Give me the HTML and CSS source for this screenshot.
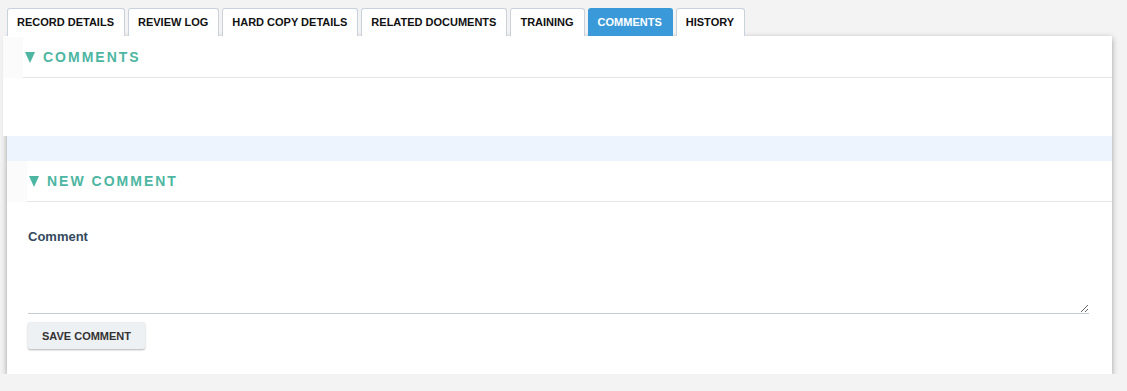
FILE: index.html
```html
<!DOCTYPE html>
<html>
<head>
<meta charset="utf-8">
<link rel="stylesheet" href="styles.css">
</head>
<body>
<div class="page">
  <nav class="tabs">
    <a class="tab">RECORD DETAILS</a>
    <a class="tab">REVIEW LOG</a>
    <a class="tab">HARD COPY DETAILS</a>
    <a class="tab">RELATED DOCUMENTS</a>
    <a class="tab">TRAINING</a>
    <a class="tab tab-active">COMMENTS</a>
    <a class="tab">HISTORY</a>
  </nav>
  <div class="card">
    <section class="sec sec-top">
      <div class="sec-head">
        <h3 class="sec-title"><svg class="caret" width="10" height="11" viewBox="0 0 10 11"><polygon points="0,0 10,0 5,11" fill="#4db6a2"/></svg>COMMENTS</h3>
      </div>
    </section>
    <div class="band"></div>
    <section class="sec">
      <div class="sec-head">
        <h3 class="sec-title"><svg class="caret" width="10" height="11" viewBox="0 0 10 11"><polygon points="0,0 10,0 5,11" fill="#4db6a2"/></svg>NEW COMMENT</h3>
      </div>
      <div class="form">
        <label class="label" for="c">Comment</label>
        <textarea id="c" class="input"></textarea>
        <button class="btn">SAVE COMMENT</button>
      </div>
    </section>
  </div>
</div>
</body>
</html>
```

FILE: styles.css
```css
html, body {
  margin: 0;
  padding: 0;
  background: #f3f3f3;
  font-family: "Liberation Sans", Arial, sans-serif;
}
.page {
  padding: 8px 0 0 7px;
}
.tabs {
  display: flex;
  gap: 3px;
  height: 28px;
}
.tab {
  box-sizing: border-box;
  height: 28px;
  padding: 7px 10px 0 9px;
  border: 1px solid #c9d1dc;
  border-bottom: none;
  border-radius: 3px 3px 0 0;
  background: #fff;
  color: #111;
  font-size: 11px;
  font-weight: bold;
  line-height: 13px;
  white-space: nowrap;
}
.tab-active {
  background: #3a9ad9;
  border-color: #3a9ad9;
  color: #fff;
}
.card {
  width: 1105px;
  background: #fff;
  box-shadow: 0 2px 6px rgba(0, 0, 0, 0.35);
  padding-bottom: 25px;
}
.sec-top {
  margin-left: -4px;
  height: 100px;
  background: #fff;
  padding-top: 1px;
  box-sizing: border-box;
  position: relative;
}
.sec-head {
  display: flex;
  background: #fbfbfb;
  padding-left: 20px;
}
.sec-title {
  flex: 1;
  margin: 0;
  height: 40px;
  display: flex;
  align-items: center;
  gap: 8px;
  padding-left: 2px;
  background: #fff;
  border-bottom: 1px solid #e6e6e6;
  color: #4db6a2;
  font-size: 14px;
  font-weight: bold;
  letter-spacing: 2px;
}
.caret {
  flex: none;
}
.band {
  height: 25px;
  background: #edf4fd;
}
.form {
  display: flex;
  flex-direction: column;
  align-items: flex-start;
  padding: 27px 23px 0 21px;
}
.label {
  color: #34495e;
  font-size: 13px;
  font-weight: bold;
  line-height: 15px;
  margin-bottom: 3px;
}
.input {
  box-sizing: border-box;
  width: 100%;
  height: 67px;
  border: none;
  border-bottom: 1px solid #c5cad3;
  outline: none;
  resize: vertical;
  padding: 0;
  font-family: inherit;
}
.btn {
  margin-top: 8px;
  height: 27px;
  padding: 0 14px;
  border: none;
  border-radius: 2px;
  background: #eef1f4;
  box-shadow: 0 1px 2px rgba(0, 0, 0, 0.3);
  color: #333;
  font-family: inherit;
  font-size: 11px;
  font-weight: bold;
}
```
